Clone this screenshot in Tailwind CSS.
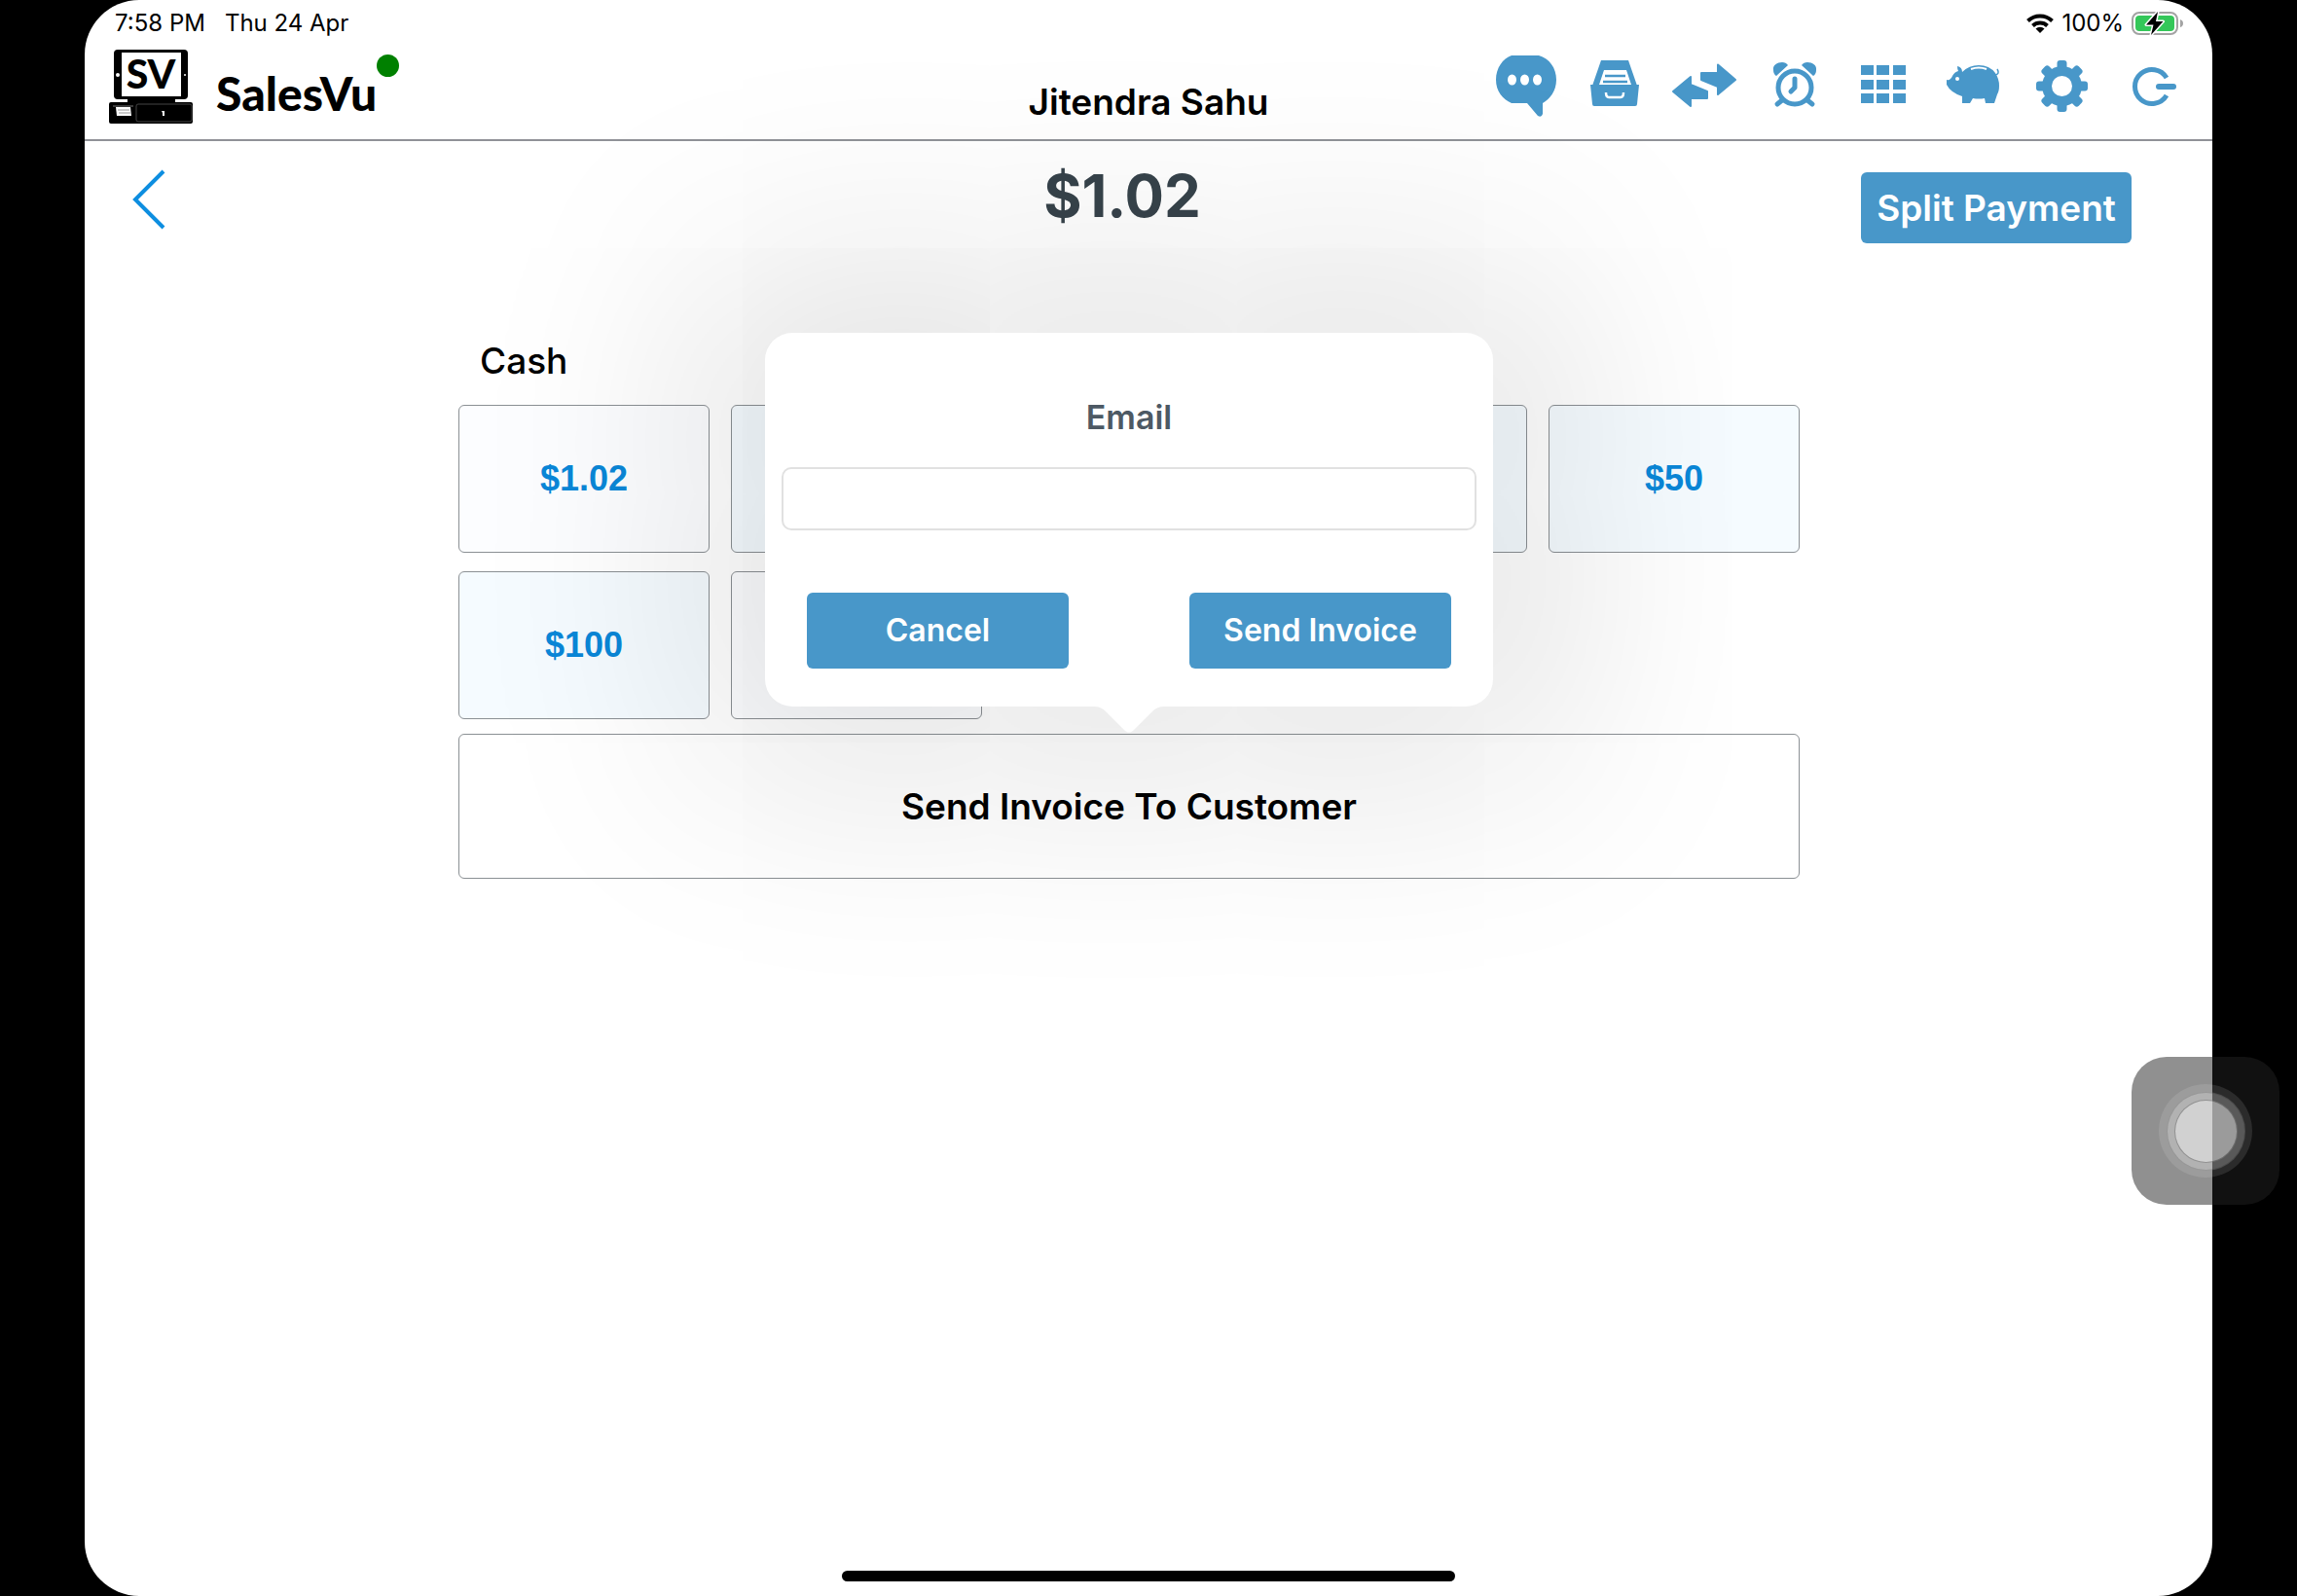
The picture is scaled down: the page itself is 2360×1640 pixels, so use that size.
<!DOCTYPE html>
<html lang="en">
<head>
    <meta charset="UTF-8">
    <meta name="viewport" content="width=device-width, initial-scale=1.0">
    <title>SalesVu - Payment</title>
    <script src="https://cdn.jsdelivr.net/npm/@tailwindcss/browser@4"></script>
</head>
<body class="bg-black min-h-screen flex px-[87px] font-['Inter',sans-serif] text-black">
    <div class="relative flex-1 flex flex-col bg-white rounded-[56px]">

        <!-- Status bar -->
        <div class="flex justify-between items-center h-12 pl-[31px] pr-[30px] text-2xl">
            <div class="flex gap-5">
                <span>7:58 PM</span>
                <span>Thu 24 Apr</span>
            </div>
            <div class="flex items-center gap-2">
                <svg class="w-7 h-5" viewBox="0 0 28 20" fill="none" stroke="#000" stroke-width="4">
                    <path d="M1.5 7.500a18 18 0 0 1 25 0"/>
                    <path d="M6.500 12.500a11 11 0 0 1 15 0"/>
                    <path d="M14 20l-4.500-4.500a6.500 6.500 0 0 1 9 0z" fill="#000" stroke="none"/>
                </svg>
                <span>100%</span>
                <svg class="w-[53px] h-6" viewBox="0 0 53 24">
                    <rect x="1" y="1" width="46" height="22" rx="7" fill="#fff" stroke="#a3a3a3" stroke-width="2"/>
                    <rect x="4" y="4" width="40" height="16" rx="4" fill="#34c759"/>
                    <path d="M50 8q3 1 3 4t-3 4z" fill="#a3a3a3"/>
                    <path d="M27 0L15 13.500h7.500L20 24l12.500-14H25z" fill="#000" stroke="#fff" stroke-width="3" paint-order="stroke" stroke-linejoin="round"/>
                </svg>
            </div>
        </div>

        <!-- Header -->
        <header class="grid grid-cols-[1fr_auto_1fr] h-[97px] px-[15px] border-b-2 border-[#909297]">
            <div class="flex items-start pl-2.5">
                <svg class="w-[86px] h-[76px] mt-[3px] overflow-visible" viewBox="0 0 86 76">
                    <rect x="5" y="0" width="76" height="51" rx="4"/>
                    <rect x="13" y="3" width="61" height="45" fill="#fff"/>
                    <circle cx="9" cy="26" r="2" fill="#fff"/>
                    <circle cx="78" cy="26" r="1" fill="#fff"/>
                    <rect x="19" y="50" width="49" height="6"/>
                    <rect x="0" y="54" width="86" height="22" rx="2"/>
                    <rect x="28" y="56" width="57" height="18" rx="2" fill="none" stroke="#444" stroke-width="1"/>
                    <path d="M4 58h21" stroke="#777" stroke-width="1"/>
                    <path d="M7 59h15l1 9H8z" fill="#fff"/>
                    <path d="M9 62h12M10 65h12" stroke="#999" stroke-width="1"/>
                    <path d="M54 63h3v5h-2v-3z" fill="#fff"/>
                    <text x="43" y="40" text-anchor="middle" font-family="Lato, sans-serif" font-weight="900" font-size="41">SV</text>
                </svg>
                <span class="ml-6 mt-[24px] text-5xl leading-[48px] font-black font-['Lato',sans-serif]">SalesVu</span>
                <span class="mt-2 size-[23px] rounded-full bg-[#008000]"></span>
            </div>
            <h1 class="mt-9 text-[37px] leading-[42px] font-semibold">Jitendra Sahu</h1>
            <nav class="flex justify-end items-start pt-[9px] text-[#4897c9]">
                <button class="w-[92px] flex justify-center" aria-label="Messages">
                    <svg class="size-16" viewBox="0 0 64 64" fill="currentColor">
                        <path d="M17 0h28C56 3 63 13 63 25S56 45 49 49V60q-1 4-5 2L33 49H17C8 45 1 37 1 25S8 3 17 0z"/>
                        <g fill="#fff"><ellipse cx="17.500" cy="25" rx="4.500" ry="5.500"/><ellipse cx="30.500" cy="25" rx="4.500" ry="5.500"/><ellipse cx="43.500" cy="25" rx="4.500" ry="5.500"/></g>
                    </svg>
                </button>
                <button class="w-[92px] flex justify-center" aria-label="Orders">
                    <svg class="size-16" viewBox="0 0 64 64" fill="currentColor">
                        <path d="M17 5h28l9 26H8z"/>
                        <path d="M20 15h23l5 15H15z" fill="#fff"/>
                        <path d="M21 21h21M19 27h25" stroke="currentColor" stroke-width="2.500"/>
                        <path d="M6 30h50l-2 20q0 2-2 2H10q-2 0-2-2z"/>
                        <path d="M22 38q0 5 3 5h12q3 0 3-5" fill="none" stroke="#fff" stroke-width="2.500"/>
                    </svg>
                </button>
                <button class="w-[92px] flex justify-center" aria-label="Transfers">
                    <svg class="size-16 overflow-visible" viewBox="0 0 64 64" fill="currentColor" stroke="currentColor" stroke-width="2" stroke-linejoin="round">
                        <path d="M-1 37L17 22v8l17 7v7H17v8z"/>
                        <path d="M28 18h17V9.500L63 25 45 40v-8l-17-7z"/>
                    </svg>
                </button>
                <button class="w-[92px] flex justify-center" aria-label="Time clock">
                    <svg class="size-16" viewBox="0 0 64 64" fill="none" stroke="currentColor" stroke-linecap="round">
                        <circle cx="32" cy="33" r="17" stroke-width="5"/>
                        <path d="M32 24v9l-4 4" stroke-width="5" stroke-linejoin="round"/>
                        <path d="M19 46l-5 4M45 46l5 4" stroke-width="5"/>
                        <path d="M10 15C9 10 14 7 19 7q4 0 6 3L13 21q-3-2-3-6zM54 15C55 10 50 7 45 7q-4 0-6 3L51 21q3-2 3-6z" fill="currentColor" stroke="none"/>
                    </svg>
                </button>
                <button class="w-[92px] flex justify-center" aria-label="Apps">
                    <svg class="size-16" viewBox="0 0 64 64" fill="currentColor">
                        <path d="M8 10h13v10H8zM24 10h13v10H24zM41 10h13v10H41zM8 25h13v10H8zM24 25h13v10H24zM41 25h13v10H41zM8 39h13v10H8zM24 39h13v10H24zM41 39h13v10H41z"/>
                    </svg>
                </button>
                <button class="w-[92px] flex justify-center" aria-label="Savings">
                    <svg class="size-16" viewBox="0 0 64 64" fill="currentColor">
                        <path d="M15 11q5 1 5 6Q27 10 37 10q11 0 17 8 4 6 4 13 0 6-2 9l-3 9h-9l-1-5q-6 1-12 0l-3 5h-8v-7Q8 38 4 30v-5q4 1 6-4 2-4 6-5-1-2-1-5z"/>
                        <path d="M54 20q5-1 2-6" fill="none" stroke="currentColor" stroke-width="1.500"/>
                        <path d="M29 14q8-3 16 0" fill="none" stroke="#fff" stroke-width="2"/>
                        <circle cx="15" cy="24" r="2" fill="#fff"/>
                    </svg>
                </button>
                <button class="w-[92px] flex justify-center" aria-label="Settings">
                    <svg class="size-16" viewBox="0 0 64 64" fill="currentColor">
                        <circle cx="30.500" cy="31.500" r="20.500"/>
                        <rect x="25.500" y="5" width="10" height="53" rx="3"/>
                        <rect x="25.500" y="5" width="10" height="53" rx="3" transform="rotate(45 30.500 31.500)"/>
                        <rect x="25.500" y="5" width="10" height="53" rx="3" transform="rotate(90 30.500 31.500)"/>
                        <rect x="25.500" y="5" width="10" height="53" rx="3" transform="rotate(135 30.500 31.500)"/>
                        <circle cx="30.500" cy="31.500" r="10.500" fill="#fff"/>
                    </svg>
                </button>
                <button class="w-[92px] flex justify-center" aria-label="Log out">
                    <svg class="size-16" viewBox="0 0 64 64" fill="none" stroke="currentColor" stroke-width="5">
                        <path d="M46 23A17.500 17.500 0 1 0 46 41"/>
                        <path d="M38 32h15" stroke-width="6" stroke-linecap="round"/>
                    </svg>
                </button>
            </nav>
        </header>

        <!-- Amount due -->
        <div class="grid grid-cols-[1fr_auto_1fr] items-start pl-[29px] pr-[83px] pt-7">
            <button class="justify-self-start ml-[18px] w-10 h-16 cursor-pointer" aria-label="Back">
                <svg class="w-10 h-16" viewBox="0 0 40 64" fill="none" stroke="#0d8ee0" stroke-width="4">
                    <path d="M34 3L5 32l29 29"/>
                </svg>
            </button>
            <p class="text-[60px] leading-[56px] font-bold text-[#37434b]">$1.02</p>
            <button class="justify-self-end mt-1 w-[278px] h-[73px] rounded-md bg-[#4897c9] text-white text-[37px] leading-[42px] font-semibold cursor-pointer">Split Payment</button>
        </div>

        <!-- Payment options -->
        <main class="pr-10">
            <section class="mx-auto w-full max-w-[1378px] pt-[100px]">
                <h2 class="pl-[22px] pb-6 text-[37px] leading-[42px] font-medium">Cash</h2>
                <div class="grid grid-cols-5 gap-x-[22px] gap-y-[19px] font-['Liberation_Sans',sans-serif] text-[36px] font-bold text-[#0a87d8]">
                    <button class="h-[152px] rounded-md border border-[#8b9094] bg-[#fcfdff]">$1.02</button>
                    <button class="h-[152px] rounded-md border border-[#8b9094] bg-[#f5fbff]"></button>
                    <button class="h-[152px] rounded-md border border-[#8b9094] bg-[#f5fbff]"></button>
                    <button class="h-[152px] rounded-md border border-[#8b9094] bg-[#f5fbff]"></button>
                    <button class="h-[152px] rounded-md border border-[#8b9094] bg-[#f5fbff]">$50</button>
                    <button class="h-[152px] rounded-md border border-[#8b9094] bg-[#f5fbff]">$100</button>
                    <button class="h-[152px] rounded-md border border-[#8b9094] bg-[#fcfdff]"></button>
                </div>

                <div class="relative mt-[15px]">
                    <button class="w-full h-[149px] rounded-md border border-[#8b9094] text-[37px] leading-[42px] font-semibold">Send Invoice To Customer</button>

                    <!-- Email popover -->
                    <form class="absolute bottom-full left-1/2 -translate-x-1/2 mb-7 w-[748px] rounded-[28px] bg-white px-[17px] pt-[66px] pb-[39px] shadow-[0_0_220px_90px_rgba(8,8,0,0.1)]">
                        <label for="email" class="block text-center text-[34px] leading-[42px] font-semibold text-[#4d5964]">Email</label>
                        <input id="email" type="email" class="mt-[30px] block w-full h-[65px] rounded-[10px] border-2 border-[#e1e1e1] px-4 text-[32px]">
                        <div class="mt-16 flex justify-between px-[26px] text-[32px] font-semibold text-white">
                            <button type="button" class="w-[269px] h-[78px] rounded-md bg-[#4897c9]">Cancel</button>
                            <button type="submit" class="w-[269px] h-[78px] rounded-md bg-[#4897c9]">Send Invoice</button>
                        </div>
                        <svg class="absolute top-full left-1/2 -translate-x-1/2 w-[72px] h-[27px]" viewBox="0 0 72 27" fill="#fff">
                            <path d="M0 0q7 0 12 5l20 20q4 3 8 0l20-20q5-5 12-5z"/>
                        </svg>
                    </form>
                </div>
            </section>
        </main>

        <!-- Home indicator -->
        <div class="mt-auto mb-[15px] mx-auto w-[630px] h-[11px] rounded-full bg-black"></div>
    </div>

    <!-- AssistiveTouch -->
    <button class="fixed right-[18px] top-[1086px] size-[152px] rounded-[36px] bg-[#222222]/50 flex items-center justify-center" aria-label="AssistiveTouch">
        <span class="size-24 rounded-full bg-white/11 flex items-center justify-center">
            <span class="size-[81px] rounded-full border border-black/15 bg-white/22 flex items-center justify-center">
                <span class="size-[65px] rounded-full border border-black/30 bg-white/40"></span>
            </span>
        </span>
    </button>
</body>
</html>
